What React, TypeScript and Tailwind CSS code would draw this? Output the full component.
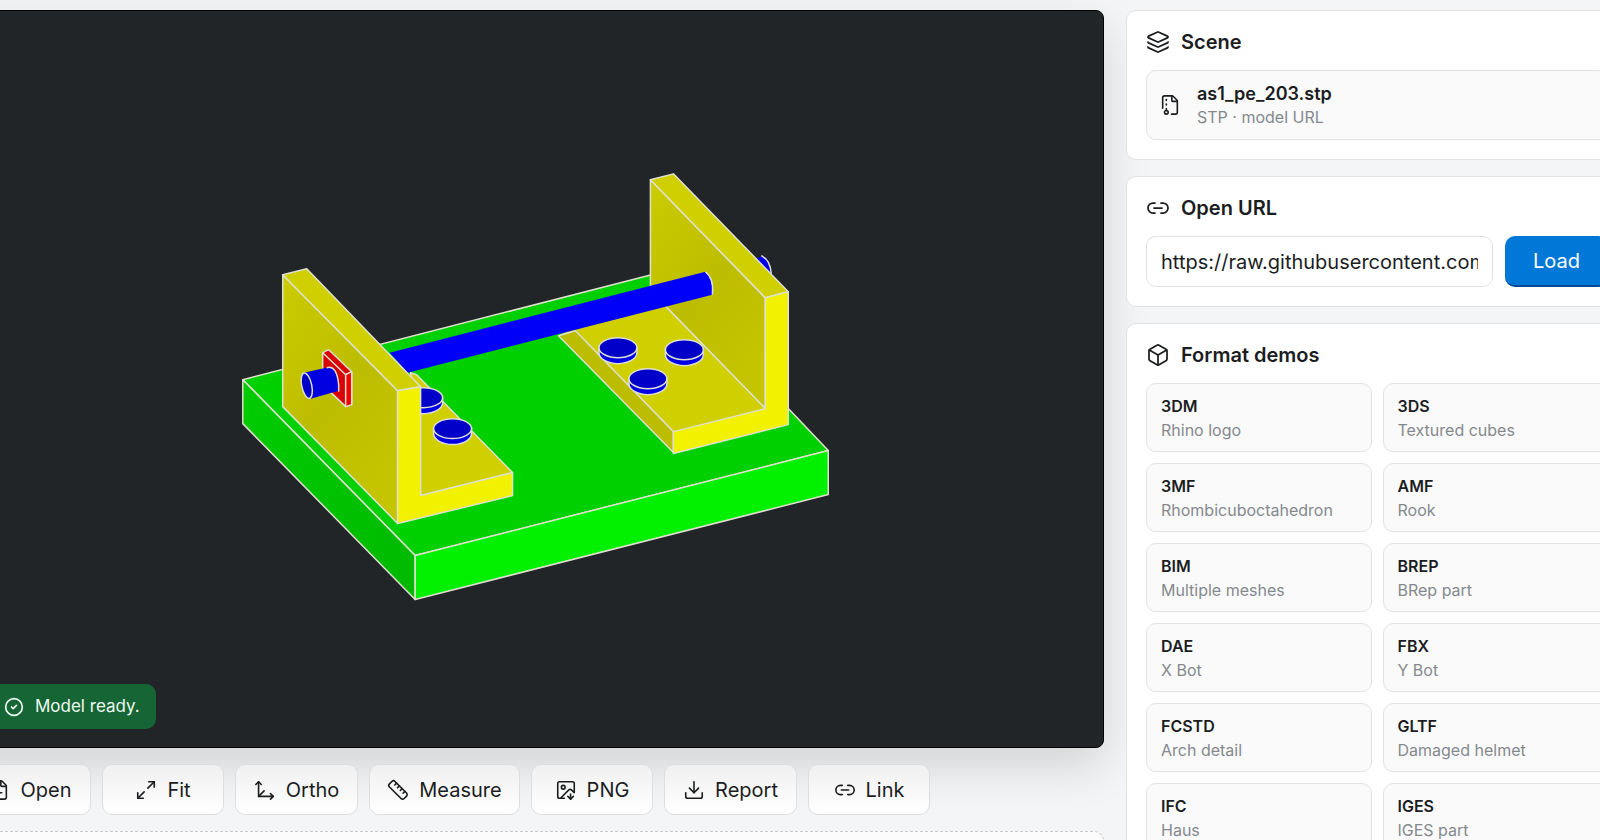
import React from "react";
import {
  Box,
  CircleCheck,
  Download,
  FileArchive,
  FilePlus,
  ImageDown,
  Layers,
  Link2,
  Maximize2,
  Move3d,
  Ruler,
} from "lucide-react";

const actions = [
  { label: "Open", icon: FilePlus, width: "w-[122px]" },
  { label: "Fit", icon: Maximize2, width: "w-[122px]" },
  { label: "Ortho", icon: Move3d, width: "w-[123px]" },
  { label: "Measure", icon: Ruler, width: "w-[151px]" },
  { label: "PNG", icon: ImageDown, width: "w-[122px]" },
  { label: "Report", icon: Download, width: "w-[133px]" },
  { label: "Link", icon: Link2, width: "w-[122px]" },
];

const demos = [
  ["3DM", "Rhino logo"],
  ["3DS", "Textured cubes"],
  ["3MF", "Rhombicuboctahedron"],
  ["AMF", "Rook"],
  ["BIM", "Multiple meshes"],
  ["BREP", "BRep part"],
  ["DAE", "X Bot"],
  ["FBX", "Y Bot"],
  ["FCSTD", "Arch detail"],
  ["GLTF", "Damaged helmet"],
  ["IFC", "Haus"],
  ["IGES", "IGES part"],
];

// flat disc with a visible rim
function Bolt({ x, y }: { x: number; y: number }) {
  return (
    <g>
      <path d={`M${x - 19} ${y}v5a19 11 0 0 0 38 0v-5z`} fill="#0000e6" />
      <ellipse cx={x} cy={y} rx="19" ry="10" fill="#0000c8" />
    </g>
  );
}

function Model() {
  return (
    <svg
      viewBox="0 0 1104 737"
      className="block h-auto w-full"
      role="img"
      aria-label="as1_pe_203.stp"
      stroke="#e0e0d0"
      strokeWidth="1.5"
      strokeLinejoin="round"
    >
      <defs>
        <linearGradient id="wall" x1="0" y1="0" x2="0.6" y2="1">
          <stop offset="0" stopColor="#cccc00" />
          <stop offset="0.55" stopColor="#bdbd00" />
          <stop offset="1" stopColor="#c4c400" />
        </linearGradient>
        <linearGradient id="side" x1="0" y1="0" x2="1" y2="1">
          <stop offset="0" stopColor="#00cc00" />
          <stop offset="1" stopColor="#00b800" />
        </linearGradient>
        <clipPath id="behind">
          <path d="M421 376h120v130H421z" />
        </clipPath>
      </defs>

      <g transform="translate(0 -10)">
        {/* base plate */}
        <path d="M243 379L660 272L829 450L415.500 555z" fill="#00d000" />
        <path d="M243 379L415.500 555V599L243 423z" fill="url(#side)" />
        <path d="M415.500 555L829 450V494L415.500 599z" fill="#00f000" />

        {/* right bracket */}
        <path d="M754 259L764 255Q772 260 772 274z" fill="#0000e6" stroke="none" />
        <path d="M762 255Q771 259 772 273" fill="none" />
        <path d="M651 179L766 297V408L651 290z" fill="url(#wall)" />
        <path d="M559 335L651 290L766 408L674 431L576 330z" fill="#d0d000" stroke="none" />
        <path d="M559 335L576 330L674 431V452z" fill="#bcbc00" />
        <path d="M651 290L766 408" fill="none" />
        <path d="M651 179L674 173L789 291L766 297z" fill="#d0d000" />
        <path d="M766 297L789 291V424L674 453V431L766 408z" fill="#f2f200" />
        <Bolt x={618.5} y={347} />
        <Bolt x={685} y={349} />
        <Bolt x={648.5} y={378} />

        {/* rod */}
        <path d="M390 352L706 271Q714 277 713 294L408 372z" fill="#0000fa" stroke="none" />
        <path d="M706 271Q715 278 713 294" fill="none" />

        {/* left bracket */}
        <path d="M411 372L417 374L513 472L421 495z" fill="#d0d000" />
        <g clipPath="url(#behind)">
          <Bolt x={424} y={397} />
        </g>
        <Bolt x={453} y={428} />
        <path d="M283 274L398 390V523L283 406z" fill="url(#wall)" />
        <path d="M283 274L307 268L421 386L398 390z" fill="#d0d000" />
        <path d="M398 390L421 386V495L513 472V495L398 523z" fill="#f2f200" />

        {/* nut and rod end */}
        <path d="M323 352l6-3 23 22v33l-6 2-23-22z" fill="#d80000" />
        <path d="M323 352l23 22v32M346 374l6-3" fill="none" />
        <path d="M346 374l6-3v33l-6 2z" fill="#f00000" />
        <path d="M304 372L331 366Q340 373 339 390L311 398z" fill="#0000e0" stroke="none" />
        <path d="M327 367Q337 364 339 384V391" fill="none" />
        <ellipse cx="307" cy="385" rx="5" ry="13" fill="#0000c8" transform="rotate(-12 307 385)" />
      </g>
    </svg>
  );
}

function Card({
  title,
  icon: Icon,
  children,
}: {
  title: string;
  icon: React.ElementType;
  children: React.ReactNode;
}) {
  return (
    <section className="rounded-[10px] border border-[#e0e2e4] bg-white p-[19px]">
      <h2 className="flex h-6 items-center gap-[11px] text-xl font-semibold">
        <Icon size={24} strokeWidth={1.75} />
        {title}
      </h2>
      {children}
    </section>
  );
}

export default function App() {
  return (
    <div className="h-screen overflow-hidden bg-[#f3f5f6] pt-[10px] font-['Inter',sans-serif] text-[#1b1d1f]">
      <div className="flex items-start gap-[22px]">
        {/* LEFT */}
        <main className="min-w-0 flex-1">
          <div className="relative -ml-12 rounded-lg border border-black bg-[#212528] pl-[47px] shadow-[0_18px_48px_rgba(0,0,0,0.14)]">
            <Model />
            <div
              role="status"
              className="absolute bottom-[18px] left-[47px] flex h-[45px] items-center gap-[11px] rounded-r-[10px] bg-[#166534] pr-4 pl-1 text-[17px] text-[#eefbf2]"
            >
              <CircleCheck size={20} strokeWidth={2} />
              Model ready.
            </div>
          </div>

          <div className="relative mt-4 -ml-[31px] flex gap-[11px]">
            {actions.map(({ label, icon: Icon, width }) => (
              <button
                key={label}
                type="button"
                className={`flex h-[51px] items-center justify-center gap-[10px] rounded-[10px] border border-[#dcdee0] bg-linear-to-b from-[#f0f0f0] to-white text-xl hover:bg-white ${width}`}
              >
                <Icon size={22} strokeWidth={1.75} />
                {label}
              </button>
            ))}
          </div>

          <div className="relative mt-4 h-24 rounded-tr-[10px] border-t border-r border-dashed border-[#c8cacc] bg-[#fcfcfd]" />
        </main>

        {/* RIGHT */}
        <aside className="relative -mr-7 flex w-[502px] shrink-0 flex-col gap-4">
          <Card title="Scene" icon={Layers}>
            <div className="mt-4 flex h-[70px] items-center gap-4 rounded-[10px] border border-[#e0e2e4] bg-[#fafafa] px-3">
              <FileArchive size={22} strokeWidth={1.75} />
              <div>
                <p className="text-lg leading-6 font-semibold">as1_pe_203.stp</p>
                <p className="text-base leading-[22px] text-[#85898d]">STP · model URL</p>
              </div>
            </div>
          </Card>

          <Card title="Open URL" icon={Link2}>
            <form className="mt-4 flex gap-3" onSubmit={(e) => e.preventDefault()}>
              <input
                type="text"
                aria-label="Model URL"
                defaultValue="https://raw.githubusercontent.com/models/as1_pe_203.stp"
                className="h-[51px] min-w-0 flex-1 rounded-[10px] border border-[#e0e2e4] bg-white px-[14px] text-xl"
              />
              <button
                type="submit"
                className="h-[51px] w-[103px] rounded-[10px] border-b-2 border-[#004a99] bg-[#0078d7] text-xl text-white"
              >
                Load
              </button>
            </form>
          </Card>

          <Card title="Format demos" icon={Box}>
            <div className="mt-4 grid grid-cols-2 gap-[11px]">
              {demos.map(([name, detail]) => (
                <button
                  key={name}
                  type="button"
                  className="flex h-[69px] flex-col justify-center rounded-[10px] border border-[#e0e2e4] bg-[#fafafa] px-[14px] text-left"
                >
                  <span className="text-base leading-6 font-semibold">{name}</span>
                  <span className="text-base leading-6 text-[#85898d]">{detail}</span>
                </button>
              ))}
            </div>
          </Card>
        </aside>
      </div>
    </div>
  );
}
